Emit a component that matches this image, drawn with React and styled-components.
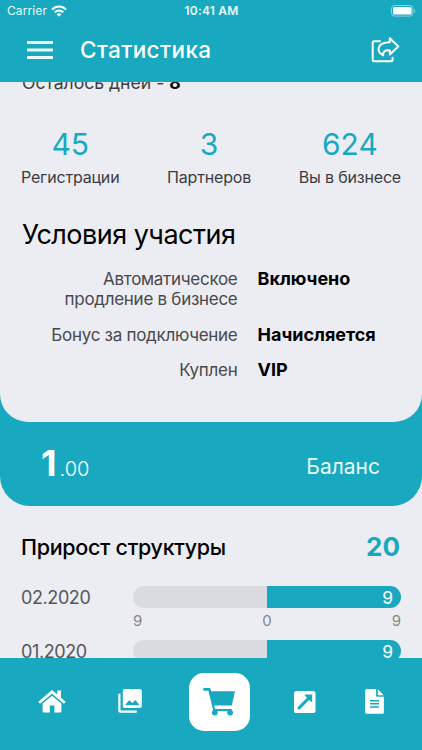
import React from "react"
import styled, { createGlobalStyle } from "styled-components"

const teal = "#18a9c0"
const light = "#ecedf3"

const GlobalStyle = createGlobalStyle`
  * {
    box-sizing: border-box;
  }
  body {
    margin: 0;
    font-family: Inter, "Liberation Sans", sans-serif;
    background-color: ${light};
  }
`

const Screen = styled.div`
  width: 422px;
  height: 750px;
  display: flex;
  flex-direction: column;
  overflow: hidden;
  background-color: ${light};
`

const Top = styled.header`
  flex: none;
  height: 81.5px;
  background-color: ${teal};
  color: #fff;
`

const StatusBar = styled.div`
  height: 22px;
  padding: 0 6px 0 7px;
  display: grid;
  grid-template-columns: 1fr auto 1fr;
  align-items: center;
  font-size: 12px;
  line-height: 22px;
  color: #e9fbfd;
`

const Carrier = styled.span`
  display: flex;
  align-items: center;
  gap: 4px;
  letter-spacing: 0.1px;
`

const Time = styled.span`
  font-size: 12px;
  font-weight: 600;
  letter-spacing: 0.2px;
`

const Battery = styled.svg`
  justify-self: end;
`

const TitleBar = styled.div`
  height: 55px;
  padding: 0 22px 0 27px;
  display: flex;
  align-items: center;
`

const Title = styled.h1`
  flex: 1;
  margin: 0 0 0 27px;
  font-size: 22.5px;
  font-weight: 500;
  letter-spacing: 0.4px;
`

const Content = styled.main`
  flex: 1;
  min-height: 0;
  overflow: hidden;
`

const DaysLeft = styled.p`
  margin: -10px 0 0;
  padding-left: 22px;
  height: 22px;
  font-size: 17.6px;
  line-height: 21px;
  color: #3c3c40;
  b {
    font-weight: 700;
    color: #111;
  }
`

const Stats = styled.section`
  display: flex;
  justify-content: space-between;
  padding: 0 21px;
  margin-top: 32px;
`

const Stat = styled.div`
  display: flex;
  flex-direction: column;
  align-items: center;
`

const StatValue = styled.span`
  font-size: 30px;
  line-height: 36px;
  color: ${teal};
`

const StatLabel = styled.span`
  margin-top: 6px;
  font-size: 16px;
  line-height: 19px;
  letter-spacing: -0.18px;
  color: #3c3c40;
`

const Heading = styled.h2`
  margin: 30px 0 0;
  padding-left: 22px;
  font-size: 27px;
  line-height: 36px;
  font-weight: 400;
  letter-spacing: -0.5px;
  color: #000;
`

const Terms = styled.dl`
  display: grid;
  grid-template-columns: 237.5px 1fr;
  column-gap: 20px;
  row-gap: 14px;
  margin: 15px 0 0;
  height: 126px;
  align-content: start;
`

const Term = styled.dt`
  padding-top: 1px;
  font-size: 17px;
  line-height: 20.5px;
  letter-spacing: -0.28px;
  text-align: right;
  color: #48484c;
`

const TermValue = styled.dd`
  margin: 0;
  font-size: 18px;
  line-height: 21px;
  font-weight: 700;
  color: #000;
`

const BalanceWrap = styled.section`
  height: 112px;
  border-radius: 0 0 30px 30px;
  background-color: ${teal};
  color: #fff;
`

// lower edge of the panel above, rounded over the balance
const PanelEdge = styled.div`
  height: 28.5px;
  border-radius: 0 0 29px 29px;
  background-color: ${light};
`

const Balance = styled.div`
  display: flex;
  justify-content: space-between;
  align-items: center;
  padding: 19px 42px 0 41px;
`

const Amount = styled.span`
  font-size: 36px;
  line-height: 44px;
  font-weight: 700;
  small {
    margin-left: 3px;
    font-size: 20px;
    font-weight: 300;
  }
`

const BalanceLabel = styled.span`
  font-size: 21px;
  font-weight: 400;
  color: #e6fafc;
`

const GrowthHeader = styled.div`
  display: flex;
  justify-content: space-between;
  align-items: center;
  height: 32px;
  margin-top: 25px;
  padding: 0 22px 0 21px;
`

const GrowthTitle = styled.h3`
  margin: 0;
  font-size: 21.5px;
  font-weight: 500;
  letter-spacing: -0.3px;
  color: #000;
`

const GrowthTotal = styled.span`
  font-size: 26px;
  font-weight: 700;
  color: ${teal};
`

const Months = styled.div`
  padding: 23px 21px 0;
`

const Month = styled.div`
  display: grid;
  grid-template-columns: 112px 1fr;
  height: 54px;
`

const MonthName = styled.span`
  font-size: 18px;
  line-height: 23px;
  letter-spacing: -0.4px;
  color: #55565a;
`

const Bar = styled.div`
  display: flex;
  justify-content: flex-end;
  height: 22.5px;
  border-radius: 12px;
  overflow: hidden;
  background-color: #dadbe0;
`

const BarFill = styled.div`
  width: 50%;
  padding-right: 8px;
  background-color: ${teal};
  color: #fff;
  font-size: 17.5px;
  line-height: 23px;
  text-align: right;
`

const Scale = styled.div`
  display: flex;
  justify-content: space-between;
  font-size: 15px;
  line-height: 18px;
  margin-top: 4px;
  color: #85868a;
`

const Nav = styled.nav`
  flex: none;
  height: 92px;
  padding: 15px 37px 0 38px;
  display: grid;
  grid-template-columns: 80px 71px 105px 71px 19px;
  justify-items: start;
  align-items: start;
  background-color: ${teal};
`

const NavItem = styled.a`
  display: flex;
  align-items: center;
  justify-content: center;
  height: 57.5px;
`

const CartButton = styled(NavItem)`
  width: 60.5px;
  border-radius: 15px;
  background-color: #fff;
`

const Wifi = () => (
  <svg width="16" height="12" viewBox="0 0 16 12" fill="none" stroke="#fff" strokeWidth="2">
    <path d="M1 4.6C5 .4 11 .4 15 4.6" />
    <path d="M3.7 7.3C6.2 4.8 9.8 4.8 12.3 7.3" />
    <path d="M8 11.7L5.5 9.2C7 7.9 9 7.9 10.5 9.2z" fill="#fff" stroke="none" />
  </svg>
)

const BatteryIcon = () => (
  <Battery width="25" height="12" viewBox="0 0 25 12">
    <rect x=".5" y=".5" width="21.5" height="10.6" rx="3" fill="none" stroke="#86d5e0" />
    <rect x="2" y="2" width="18.6" height="7.6" rx="1.6" fill="#fff" />
    <path d="M23.2 4v4c1.3-.5 1.3-3.5 0-4z" fill="#86d5e0" />
  </Battery>
)

const MenuIcon = () => (
  <svg width="26" height="18" viewBox="0 0 26 18" fill="#e9fbfd">
    <path d="M0 0h26v2.9H0zM0 7.5h26v2.9H0zM0 15h26v2.9H0z" />
  </svg>
)

const ShareIcon = () => (
  <svg
    width="29"
    height="26"
    viewBox="0 0 29 26"
    fill="none"
    stroke="#fff"
    strokeWidth="2"
    strokeLinejoin="round"
    strokeLinecap="round"
  >
    <path d="M9 4.2H3.2Q1.7 4.2 1.7 5.7V22.8Q1.7 24.3 3.2 24.3H20Q21.6 24.3 21.6 22.8V20.8" />
    <path d="M18.8 1.3L27.3 9.4L18.8 17.4V13.4C14 13 11.6 14.6 12.2 18.4C5 14.6 5.6 5.4 18.8 5.3z" />
  </svg>
)

const HomeIcon = () => (
  <svg width="28" height="23" viewBox="0 0 28 23" fill="#fff">
    <path d="M14 0L19.3 4.5V.6H23V7.8L27.7 11.8L26 13.8L14 3.8L2 13.8L.3 11.8z" />
    <path d="M14 5.7L23.4 13.5V21.2Q23.4 22.4 22.2 22.4H16.4V15.4H11.8V22.4H5.8Q4.6 22.4 4.6 21.2V13.5z" />
  </svg>
)

const PhotosIcon = () => (
  <svg width="24" height="26" viewBox="0 0 24 26" fill="#fff">
    <path d="M.3 4.8H2.5V21.6H18.8V23.8H2.3Q.3 23.8 .3 21.8z" />
    <path
      fillRule="evenodd"
      d="M6.8 0H21.8Q23.8 0 23.8 2V16.9Q23.8 18.9 21.8 18.9H6.8Q4.8 18.9 4.8 16.9V2Q4.8 0 6.8 0zM7.8 16.3H20.8V15L17.2 10.9L14.6 14L11.2 11.2L7.8 15.2z"
    />
  </svg>
)

const CartIcon = () => (
  <svg width="32" height="29" viewBox="0 0 33 30" fill={teal}>
    <path d="M1.4 1H6.3Q7.6 1 7.9 2.3L8.5 4.3H33L29.8 19.1H11.6L12.4 22.7H29.6V24.8H10.7L5.5 4H1.4Q.1 4 .1 2.5T1.4 1z" />
    <circle cx="12.2" cy="26.5" r="3" />
    <circle cx="28" cy="26.5" r="3" />
  </svg>
)

const LinkIcon = () => (
  <svg width="22" height="22" viewBox="0 0 22 22">
    <rect width="21.5" height="22" rx="2.6" fill="#fff" />
    <path d="M5 17L14.7 7.3" stroke={teal} strokeWidth="3" strokeLinecap="round" />
    <path d="M10.3 3.6H18.2V11.4L15.8 9.5L12.4 6.2z" fill={teal} />
  </svg>
)

const DocumentIcon = () => (
  <svg width="19" height="25" viewBox="0 0 19 25">
    <path d="M1.6 0H11.1V6.7Q11.1 7.7 12.1 7.7H18.9V23.3Q18.9 24.8 17.4 24.8H1.6Q.1 24.8 .1 23.3V1.5Q.1 0 1.6 0z" fill="#fff" />
    <path d="M12.8 .2L18.7 6.2H13.6Q12.8 6.2 12.8 5.4z" fill="#fff" />
    <path d="M5 11.7H14M5 14.8H14M5 17.9H14" stroke={teal} strokeWidth="1.5" />
  </svg>
)

const stats = [
  { value: 45, label: "Регистрации" },
  { value: 3, label: "Партнеров" },
  { value: 624, label: "Вы в бизнесе" },
]

const months = [
  { name: "02.2020", value: 9 },
  { name: "01.2020", value: 9 },
]

const App = () => {
  return (
    <Screen>
      <GlobalStyle />
      <Top>
        <StatusBar>
          <Carrier>
            Carrier <Wifi />
          </Carrier>
          <Time>10:41 AM</Time>
          <BatteryIcon />
        </StatusBar>
        <TitleBar>
          <MenuIcon />
          <Title>Статистика</Title>
          <ShareIcon />
        </TitleBar>
      </Top>
      <Content>
        <DaysLeft>
          Осталось дней - <b>8</b>
        </DaysLeft>
        <Stats>
          {stats.map(({ value, label }) => (
            <Stat key={label}>
              <StatValue>{value}</StatValue>
              <StatLabel>{label}</StatLabel>
            </Stat>
          ))}
        </Stats>
        <Heading>Условия участия</Heading>
        <Terms>
          <Term>
            Автоматическое
            <br />
            продление в бизнесе
          </Term>
          <TermValue>Включено</TermValue>
          <Term>Бонус за подключение</Term>
          <TermValue>Начисляется</TermValue>
          <Term>Куплен</Term>
          <TermValue>VIP</TermValue>
        </Terms>
        <BalanceWrap>
          <PanelEdge />
          <Balance>
            <Amount>
              1<small>.00</small>
            </Amount>
            <BalanceLabel>Баланс</BalanceLabel>
          </Balance>
        </BalanceWrap>
        <GrowthHeader>
          <GrowthTitle>Прирост структуры</GrowthTitle>
          <GrowthTotal>20</GrowthTotal>
        </GrowthHeader>
        <Months>
          {months.map(({ name, value }) => (
            <Month key={name}>
              <MonthName>{name}</MonthName>
              <div>
                <Bar>
                  <BarFill>{value}</BarFill>
                </Bar>
                <Scale>
                  <span>9</span>
                  <span>0</span>
                  <span>9</span>
                </Scale>
              </div>
            </Month>
          ))}
        </Months>
      </Content>
      <Nav>
        <NavItem>
          <HomeIcon />
        </NavItem>
        <NavItem>
          <PhotosIcon />
        </NavItem>
        <CartButton>
          <CartIcon />
        </CartButton>
        <NavItem>
          <LinkIcon />
        </NavItem>
        <NavItem>
          <DocumentIcon />
        </NavItem>
      </Nav>
    </Screen>
  )
}

export default App
